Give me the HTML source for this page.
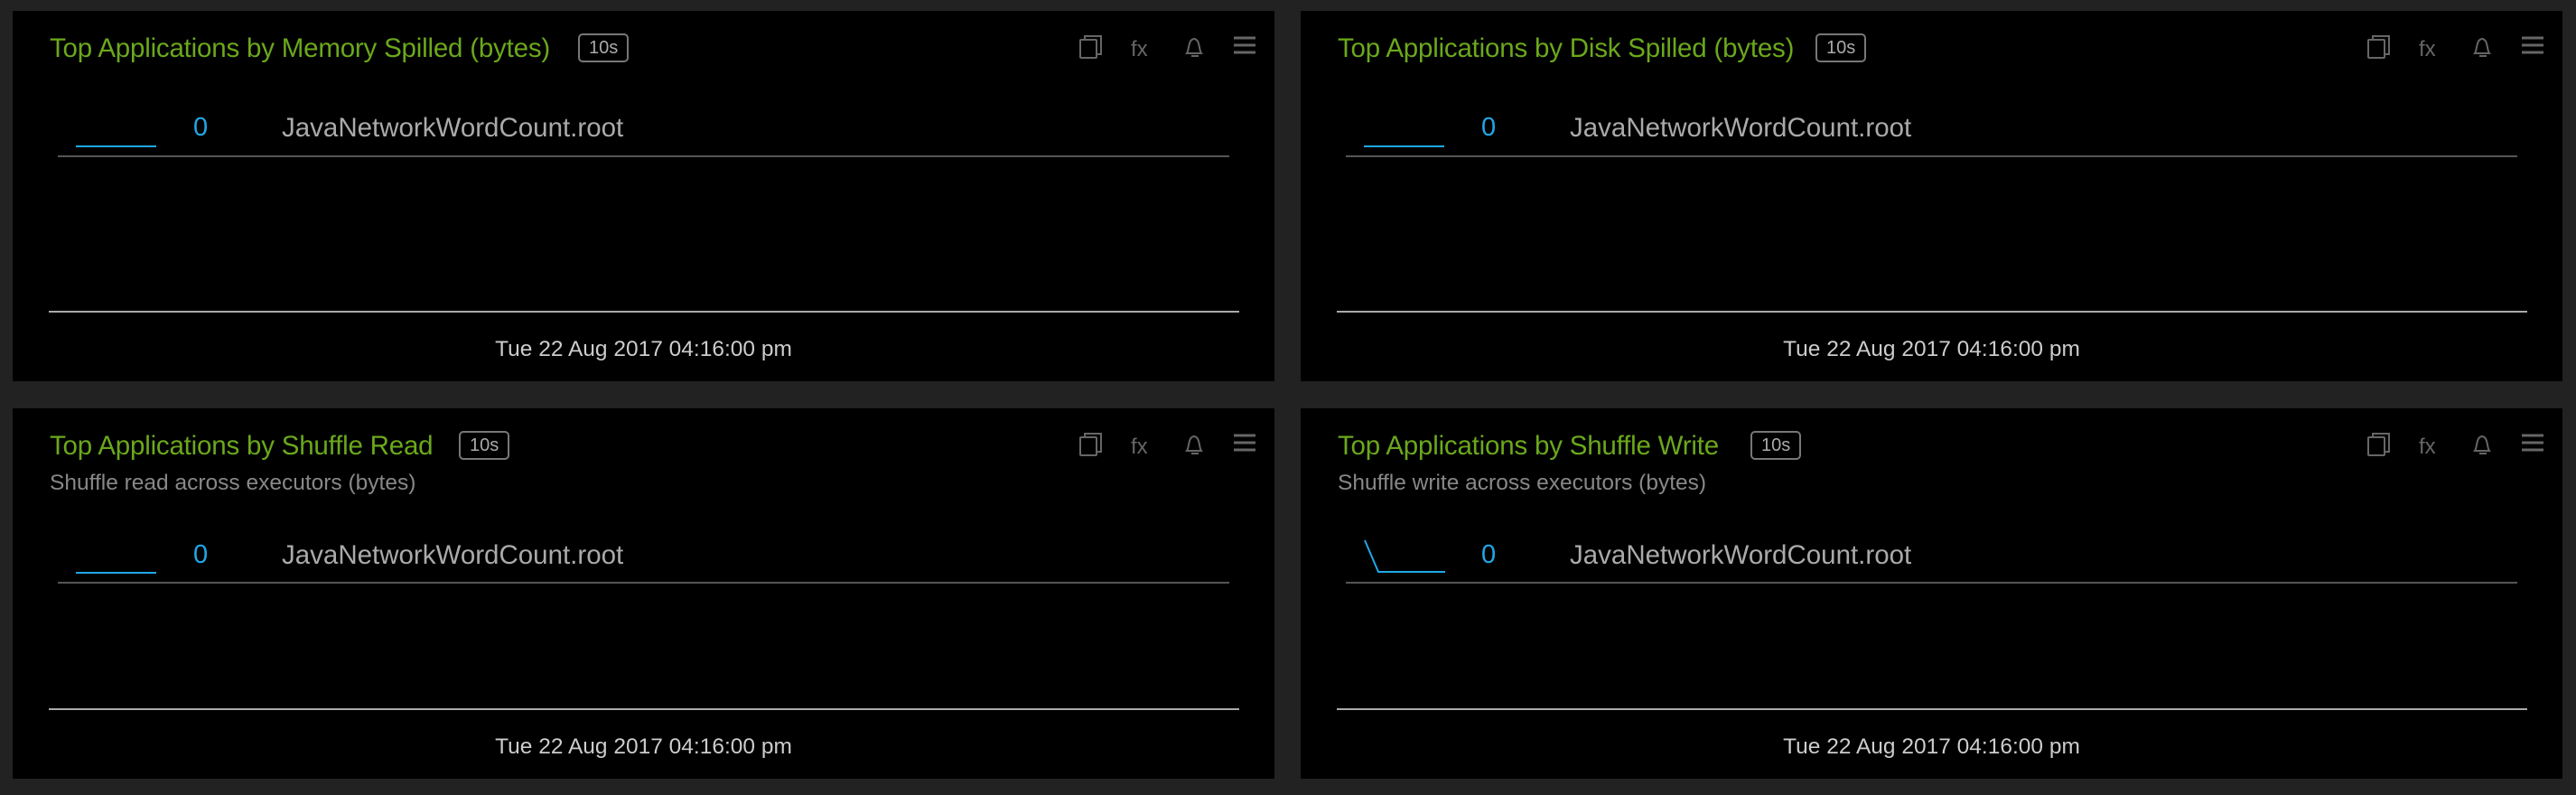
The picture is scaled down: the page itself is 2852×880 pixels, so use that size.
<!DOCTYPE html>
<html><head><meta charset="utf-8"><style>
*{margin:0;padding:0;box-sizing:border-box}
body{width:2852px;height:880px;background:#222;position:relative;overflow:hidden;font-family:"Liberation Sans",sans-serif}
.p{position:absolute;width:1397px;height:410px;background:#000}
.a{position:absolute;white-space:nowrap}
.t{color:#6ba81c;font-size:29.5px;top:25px;left:41px;letter-spacing:-0.2px}
.b{border:2px solid #777;border-radius:5px;color:#aaa;font-size:20px;height:32px;line-height:28px;padding:0 10px;top:25px}
.s{color:#888;font-size:24.5px;top:69px;left:41px}
.bl{background:#1fa8e8;height:2px;width:89px;left:70px}
.z{color:#1fa8e8;font-size:29px;left:200px}
.n{color:#aaa;font-size:29.5px;left:298px}
.sep{background:#555;height:2px;left:50px;width:1297px}
.ax{background:#aaa;height:2px;left:40px;width:1318px}
.d{color:#ccc;font-size:24.5px;left:0;width:1397px;text-align:center}
svg{position:absolute}
</style></head><body>

<!-- panel 1 -->
<div class="p" style="left:14px;top:12px">
<div class="a t">Top Applications by Memory Spilled (bytes)</div>
<div class="a b" style="left:626px">10s</div>
<svg style="left:1180px;top:26px" width="220" height="30" viewBox="0 0 220 30" fill="none" stroke="#666" stroke-width="2">
<rect x="2" y="6" width="18" height="20" rx="1"/><path d="M7 6V2h18v20h-5"/>
<text x="58" y="24" fill="#666" stroke="none" font-size="24" font-family="Liberation Sans">fx</text>
<path d="M120 21c3-4 1-15 8-16 7 1 5 12 8 16z M125 24h8"/>
<path d="M172 4h24M172 12h24M172 20h24" stroke-width="3"/>
</svg>
<div class="a bl" style="top:149px"></div>
<div class="a z" style="top:113px">0</div>
<div class="a n" style="top:113px">JavaNetworkWordCount.root</div>
<div class="a sep" style="top:160px"></div>
<div class="a ax" style="top:332px"></div>
<div class="a d" style="top:361px">Tue 22 Aug 2017 04:16:00 pm</div>
</div>

<!-- panel 2 -->
<div class="p" style="left:1440px;top:12px">
<div class="a t">Top Applications by Disk Spilled (bytes)</div>
<div class="a b" style="left:570px">10s</div>
<svg style="left:1180px;top:26px" width="220" height="30" viewBox="0 0 220 30" fill="none" stroke="#666" stroke-width="2">
<rect x="2" y="6" width="18" height="20" rx="1"/><path d="M7 6V2h18v20h-5"/>
<text x="58" y="24" fill="#666" stroke="none" font-size="24" font-family="Liberation Sans">fx</text>
<path d="M120 21c3-4 1-15 8-16 7 1 5 12 8 16z M125 24h8"/>
<path d="M172 4h24M172 12h24M172 20h24" stroke-width="3"/>
</svg>
<div class="a bl" style="top:149px"></div>
<div class="a z" style="top:113px">0</div>
<div class="a n" style="top:113px">JavaNetworkWordCount.root</div>
<div class="a sep" style="top:160px"></div>
<div class="a ax" style="top:332px"></div>
<div class="a d" style="top:361px">Tue 22 Aug 2017 04:16:00 pm</div>
</div>

<!-- panel 3 -->
<div class="p" style="left:14px;top:452px">
<div class="a t">Top Applications by Shuffle Read</div>
<div class="a b" style="left:494px">10s</div>
<div class="a s">Shuffle read across executors (bytes)</div>
<svg style="left:1180px;top:26px" width="220" height="30" viewBox="0 0 220 30" fill="none" stroke="#666" stroke-width="2">
<rect x="2" y="6" width="18" height="20" rx="1"/><path d="M7 6V2h18v20h-5"/>
<text x="58" y="24" fill="#666" stroke="none" font-size="24" font-family="Liberation Sans">fx</text>
<path d="M120 21c3-4 1-15 8-16 7 1 5 12 8 16z M125 24h8"/>
<path d="M172 4h24M172 12h24M172 20h24" stroke-width="3"/>
</svg>
<div class="a bl" style="top:181px"></div>
<div class="a z" style="top:146px">0</div>
<div class="a n" style="top:146px">JavaNetworkWordCount.root</div>
<div class="a sep" style="top:192px"></div>
<div class="a ax" style="top:332px"></div>
<div class="a d" style="top:361px">Tue 22 Aug 2017 04:16:00 pm</div>
</div>

<!-- panel 4 -->
<div class="p" style="left:1440px;top:452px">
<div class="a t">Top Applications by Shuffle Write</div>
<div class="a b" style="left:498px">10s</div>
<div class="a s">Shuffle write across executors (bytes)</div>
<svg style="left:1180px;top:26px" width="220" height="30" viewBox="0 0 220 30" fill="none" stroke="#666" stroke-width="2">
<rect x="2" y="6" width="18" height="20" rx="1"/><path d="M7 6V2h18v20h-5"/>
<text x="58" y="24" fill="#666" stroke="none" font-size="24" font-family="Liberation Sans">fx</text>
<path d="M120 21c3-4 1-15 8-16 7 1 5 12 8 16z M125 24h8"/>
<path d="M172 4h24M172 12h24M172 20h24" stroke-width="3"/>
</svg>
<svg style="left:68px;top:145px" width="96" height="40" fill="none" stroke="#1fa8e8" stroke-width="2"><path d="M3 1L18 36H92"/></svg>
<div class="a z" style="top:146px">0</div>
<div class="a n" style="top:146px">JavaNetworkWordCount.root</div>
<div class="a sep" style="top:192px"></div>
<div class="a ax" style="top:332px"></div>
<div class="a d" style="top:361px">Tue 22 Aug 2017 04:16:00 pm</div>
</div>
</body></html>
